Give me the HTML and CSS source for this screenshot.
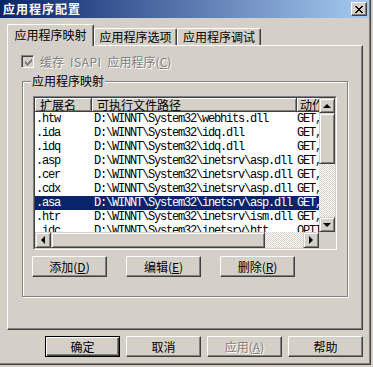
FILE: index.html
```html
<!DOCTYPE html>
<html lang="zh-CN">
<head>
    <meta charset="UTF-8">
    <title>应用程序配置</title>
    <link rel="stylesheet" href="styles.css">
</head>
<body>
    <div class="window">
        <div class="frame">
            <div class="titlebar">
                <span class="title">应用程序配置</span>
                <span class="close">
                    <svg width="8" height="7" viewBox="0 0 8 7" shape-rendering="crispEdges">
                        <path d="M0 0h2v1h-2zM6 0h2v1h-2zM1 1h2v1h-2zM5 1h2v1h-2zM2 2h4v1h-4zM3 3h2v1h-2zM2 4h4v1h-4zM1 5h2v1h-2zM5 5h2v1h-2zM0 6h2v1h-2zM6 6h2v1h-2z" fill="#000"/>
                    </svg>
                </span>
            </div>
            <div class="client">
                <div class="tabs">
                    <div class="tab active">应用程序映射</div>
                    <div class="tab second">应用程序选项</div>
                    <div class="tab third">应用程序调试</div>
                </div>
                <div class="panel">
                    <div class="check-row">
                        <span class="checkbox">
                            <svg width="7" height="7" viewBox="0 0 7 7" shape-rendering="crispEdges">
                                <path d="M0 2h1v3h-1zM1 3h1v3h-1zM2 4h1v3h-1zM3 3h1v3h-1zM4 2h1v3h-1zM5 1h1v3h-1zM6 0h1v3h-1z" fill="#808080"/>
                            </svg>
                        </span>
                        <span class="disabled">缓存<span class="latin">ISAPI</span>应用程序(<u>C</u>)</span>
                    </div>
                    <div class="group">
                        <span class="legend">应用程序映射</span>
                        <div class="list">
                            <div class="list-inner">
                                <div class="list-view">
                                    <div class="header">
                                        <div class="hcell col-ext">扩展名</div>
                                        <div class="hcell col-path">可执行文件路径</div>
                                        <div class="hcell col-verb">动作</div>
                                    </div>
                                    <div class="row"><span class="col-ext">.htw</span><span class="col-path">D:\WINNT\System32\webhits.dll</span><span class="col-verb">GET,HEAD,POST</span></div>
                                    <div class="row"><span class="col-ext">.ida</span><span class="col-path">D:\WINNT\System32\idq.dll</span><span class="col-verb">GET,HEAD,POST</span></div>
                                    <div class="row"><span class="col-ext">.idq</span><span class="col-path">D:\WINNT\System32\idq.dll</span><span class="col-verb">GET,HEAD,POST</span></div>
                                    <div class="row"><span class="col-ext">.asp</span><span class="col-path">D:\WINNT\System32\inetsrv\asp.dll</span><span class="col-verb">GET,HEAD,POST,TRACE</span></div>
                                    <div class="row"><span class="col-ext">.cer</span><span class="col-path">D:\WINNT\System32\inetsrv\asp.dll</span><span class="col-verb">GET,HEAD,POST,TRACE</span></div>
                                    <div class="row"><span class="col-ext">.cdx</span><span class="col-path">D:\WINNT\System32\inetsrv\asp.dll</span><span class="col-verb">GET,HEAD,POST,TRACE</span></div>
                                    <div class="row selected"><span class="col-ext">.asa</span><span class="col-path">D:\WINNT\System32\inetsrv\asp.dll</span><span class="col-verb">GET,HEAD,POST,TRACE</span></div>
                                    <div class="row"><span class="col-ext">.htr</span><span class="col-path">D:\WINNT\System32\inetsrv\ism.dll</span><span class="col-verb">GET,POST</span></div>
                                    <div class="row"><span class="col-ext">.idc</span><span class="col-path">D:\WINNT\System32\inetsrv\htt...</span><span class="col-verb">OPTIONS,GET,HEAD,POST</span></div>
                                </div>
                                <div class="vscroll">
                                    <div class="sbtn"><span class="arrow up"></span></div>
                                    <div class="vthumb"></div>
                                    <div class="track"></div>
                                    <div class="sbtn"><span class="arrow down"></span></div>
                                </div>
                                <div class="hscroll">
                                    <div class="sbtn"><span class="arrow left"></span></div>
                                    <div class="hthumb"></div>
                                    <div class="track"></div>
                                    <div class="sbtn"><span class="arrow right"></span></div>
                                </div>
                                <div class="sizebox"></div>
                            </div>
                        </div>
                        <div class="group-buttons">
                            <button class="btn">添加(<u>D</u>)</button>
                            <button class="btn">编辑(<u>E</u>)</button>
                            <button class="btn">删除(<u>R</u>)</button>
                        </div>
                    </div>
                </div>
                <div class="dialog-buttons">
                    <button class="btn default">确定</button>
                    <button class="btn">取消</button>
                    <button class="btn"><span class="disabled">应用(<u>A</u>)</span></button>
                    <button class="btn">帮助</button>
                </div>
            </div>
        </div>
    </div>
</body>
</html>
```

FILE: styles.css
```css
* {
    box-sizing: border-box;
}

body {
    margin: 0;
    background: #d4d0c8;
    font-family: "Noto Sans CJK SC", "Liberation Sans", sans-serif;
    font-size: 12px;
    color: #000;
}

.window {
    width: 371px;
    height: 365px;
    border-right: 1px solid #404040;
    border-bottom: 1px solid #404040;
}

.frame {
    height: 100%;
    border-right: 1px solid #808080;
    border-bottom: 1px solid #808080;
    display: flex;
    flex-direction: column;
}

.titlebar {
    height: 18px;
    flex: none;
    background: linear-gradient(to right, #0a246a, #a6caf0);
    display: flex;
    align-items: center;
    justify-content: space-between;
    padding: 0 2px 0 3px;
}

.title {
    color: #fff;
    font-weight: bold;
    letter-spacing: 1px;
    line-height: 18px;
}

.close {
    width: 16px;
    height: 14px;
    background: #d4d0c8;
    border: 1px solid;
    border-color: #fff #404040 #404040 #fff;
    box-shadow: inset -1px -1px #808080;
    display: flex;
    align-items: center;
    justify-content: center;
}

.client {
    flex: 1;
    padding: 6px 6px 0 7px;
}

/* tabs */
.tabs {
    display: flex;
    align-items: flex-end;
    height: 21px;
    position: relative;
    z-index: 1;
}

.tab {
    height: 17px;
    background: #d4d0c8;
    border-top: 1px solid #fff;
    border-left: 1px solid #fff;
    border-right: 1px solid #404040;
    box-shadow: inset -1px 0 #808080;
    border-radius: 2px 2px 0 0;
    text-align: center;
    line-height: 16px;
}

.tab.active {
    width: 87px;
    height: 22px;
    margin-bottom: -1px;
    line-height: 19px;
}

.tab.second {
    width: 83px;
}

.tab.third {
    width: 84px;
}

.panel {
    height: 285px;
    border-top: 1px solid #fff;
    border-left: 1px solid #fff;
    border-right: 1px solid #404040;
    border-bottom: 1px solid #404040;
    box-shadow: inset -1px -1px #808080;
    padding: 9px 0 0 14px;
}

.check-row {
    display: flex;
    align-items: center;
    height: 13px;
    margin-left: -1px;
    gap: 6px;
}

.checkbox {
    width: 13px;
    height: 13px;
    border: 1px solid;
    border-color: #808080 #fff #fff #808080;
    box-shadow: inset 1px 1px #404040, inset -1px -1px #d4d0c8;
    display: flex;
    align-items: center;
    justify-content: center;
    padding: 1px 0 0 1px;
}

.disabled {
    color: #808080;
    text-shadow: 1px 1px #fff;
    line-height: 13px;
}

.latin {
    margin: 0 6px;
    letter-spacing: 0.5px;
}

/* group box */
.group {
    position: relative;
    width: 326px;
    height: 216px;
    margin-top: 13px;
    border: 1px solid #808080;
    box-shadow: inset 1px 1px #fff, 1px 1px #fff;
    padding: 14px 10px 0 10px;
}

.legend {
    position: absolute;
    top: -8px;
    left: 8px;
    padding: 0 1px;
    background: #d4d0c8;
    line-height: 14px;
}

.list {
    height: 154px;
    border: 1px solid;
    border-color: #808080 #fff #fff #808080;
}

.list-inner {
    height: 100%;
    border: 1px solid;
    border-color: #404040 #d4d0c8 #d4d0c8 #404040;
    background: #fff;
    display: grid;
    grid-template-columns: 1fr 16px;
    grid-template-rows: 1fr 16px;
}

.list-view {
    overflow: hidden;
}

.header {
    display: flex;
    height: 14px;
}

.hcell {
    flex: none;
    height: 14px;
    background: #d4d0c8;
    border-right: 1px solid #404040;
    border-bottom: 1px solid #404040;
    box-shadow: inset 1px 1px #fff, inset -1px -1px #808080;
    padding-left: 5px;
    line-height: 13px;
    white-space: nowrap;
    overflow: hidden;
}

.hcell.col-verb {
    padding-left: 3px;
}

.col-ext {
    flex: none;
    width: 57px;
}

.col-path {
    flex: none;
    width: 205px;
}

.col-verb {
    flex: none;
    width: 150px;
}

.row {
    display: flex;
    height: 14px;
    line-height: 14px;
    font-family: "Liberation Mono", monospace;
    font-size: 12px;
    letter-spacing: -1.2px;
    white-space: nowrap;
}

.row span {
    padding-left: 1px;
    overflow: hidden;
}

.row .col-path {
    padding-left: 2px;
}

.row .col-verb {
    padding-left: 0;
}

.row.selected {
    background: #0a246a;
    color: #fff;
}

/* scroll bars */
.vscroll {
    display: flex;
    flex-direction: column;
}

.hscroll {
    display: flex;
}

.sbtn,
.vthumb,
.hthumb {
    flex: none;
    background: #d4d0c8;
    border: 1px solid;
    border-color: #d4d0c8 #404040 #404040 #d4d0c8;
    box-shadow: inset 1px 1px #fff, inset -1px -1px #808080;
    display: flex;
    align-items: center;
    justify-content: center;
}

.vscroll .sbtn {
    height: 15px;
}

.hscroll .sbtn {
    width: 16px;
}

.vthumb {
    height: 51px;
}

.hthumb {
    width: 214px;
}

.track {
    flex: 1;
    background: repeating-conic-gradient(#d4d0c8 0 25%, #fff 0 50%) 0 0 / 2px 2px;
}

.sizebox {
    background: #d4d0c8;
}

.arrow {
    width: 0;
    height: 0;
    border: 4px solid transparent;
}

.arrow.up {
    border-top: 0;
    border-bottom-color: #000;
}

.arrow.down {
    border-bottom: 0;
    border-top-color: #000;
}

.arrow.left {
    border-left: 0;
    border-right-color: #000;
}

.arrow.right {
    border-right: 0;
    border-left-color: #000;
}

/* buttons */
.btn {
    width: 75px;
    height: 21px;
    padding: 0;
    margin: 0;
    font: inherit;
    color: #000;
    background: #d4d0c8;
    border: 1px solid;
    border-color: #fff #404040 #404040 #fff;
    box-shadow: inset -1px -1px #808080;
    line-height: 17px;
}

.btn.default {
    border-color: #000;
    box-shadow: inset 1px 1px #fff, inset -1px -1px #404040, inset -2px -2px #808080;
}

.group-buttons {
    display: flex;
    gap: 19px;
    margin-top: 6px;
    margin-left: -1px;
}

.dialog-buttons {
    display: flex;
    justify-content: flex-end;
    gap: 6px;
    margin-top: 6px;
}
```
